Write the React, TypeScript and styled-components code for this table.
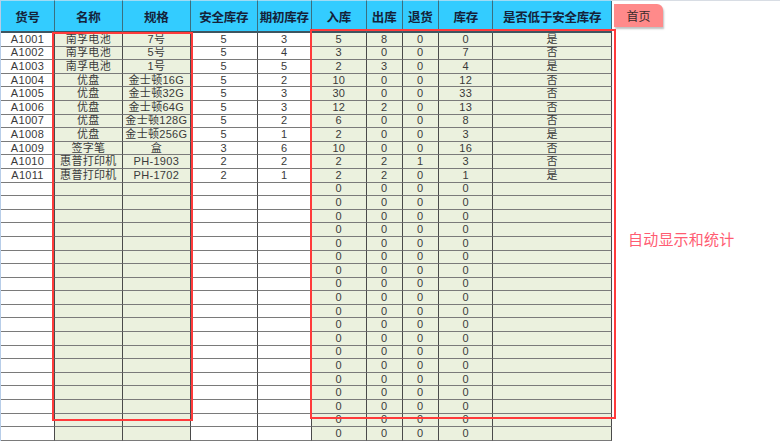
import React from "react";
import styled, { createGlobalStyle } from "styled-components";

const Global = createGlobalStyle`
  html, body { margin: 0; padding: 0; background: #ffffff; overflow: hidden; }
  body { font-family: "Liberation Sans", "Noto Sans CJK SC", sans-serif; }
`;

const COLS = [54, 67.7, 68.3, 66.7, 54.3, 54.7, 36, 36.3, 54.5, 118.5];
const GREEN = [false, true, true, false, false, true, true, true, true, true];
const HEADERS = ["货号", "名称", "规格", "安全库存", "期初库存", "入库", "出库", "退货", "库存", "是否低于安全库存"];

const DATA: string[][] = [
  ["A1001", "南孚电池", "7号", "5", "3", "5", "8", "0", "0", "是"],
  ["A1002", "南孚电池", "5号", "5", "4", "3", "0", "0", "7", "否"],
  ["A1003", "南孚电池", "1号", "5", "5", "2", "3", "0", "4", "是"],
  ["A1004", "优盘", "金士顿16G", "5", "2", "10", "0", "0", "12", "否"],
  ["A1005", "优盘", "金士顿32G", "5", "3", "30", "0", "0", "33", "否"],
  ["A1006", "优盘", "金士顿64G", "5", "3", "12", "2", "0", "13", "否"],
  ["A1007", "优盘", "金士顿128G", "5", "2", "6", "0", "0", "8", "否"],
  ["A1008", "优盘", "金士顿256G", "5", "1", "2", "0", "0", "3", "是"],
  ["A1009", "签字笔", "盒", "3", "6", "10", "0", "0", "16", "否"],
  ["A1010", "惠普打印机", "PH-1903", "2", "2", "2", "2", "1", "3", "否"],
  ["A1011", "惠普打印机", "PH-1702", "2", "1", "2", "2", "0", "1", "是"],
];
const TOTAL_ROWS = 30;
const rows: string[][] = [
  ...DATA,
  ...Array.from({ length: TOTAL_ROWS - DATA.length }, () => ["", "", "", "", "", "0", "0", "0", "0", ""]),
];

const Page = styled.div`
  display: flex;
  align-items: flex-start;
  width: 780px;
  height: 442px;
  overflow: hidden;
  position: relative;
`;

const Sheet = styled.div`
  display: grid;
  grid-template-columns: ${COLS.map((c) => `${c}px`).join(" ")};
  grid-template-rows: 33px repeat(${TOTAL_ROWS}, 13.6px);
  width: ${COLS.reduce((a, b) => a + b, 0)}px;
  flex: none;
  border-left: 1px solid #b7cde8;
  box-sizing: border-box;
`;

const HeadCell = styled.div`
  background: #33ccff;
  border-right: 1px solid #3a6f80;
  border-bottom: 2px solid #3f5560;
  border-top: 1px solid #9fdcf5;
  box-sizing: border-box;
  display: flex;
  align-items: center;
  justify-content: center;
  padding-top: 1px;
  font-family: "Noto Sans CJK SC", sans-serif;
  font-weight: 700;
  font-size: 12.5px;
  color: #15233a;
  white-space: nowrap;
  letter-spacing: -0.2px;
`;

const Cell = styled.div<{ $green: boolean }>`
  background: ${(p) => (p.$green ? "#ebf1de" : "#ffffff")};
  border-right: 1px solid #4a4a4a;
  border-bottom: 1px solid #7a7a7a;
  box-sizing: border-box;
  display: flex;
  align-items: center;
  justify-content: center;
  font-family: "Liberation Sans", "Noto Sans CJK SC", sans-serif;
  font-size: 11px;
  line-height: 1;
  color: #3a3a3a;
  white-space: nowrap;
  overflow: hidden;
  letter-spacing: 0.3px;
`;

const Side = styled.div`
  flex: 1;
  align-self: stretch;
  display: flex;
  flex-direction: column;
  align-items: flex-start;
  border-top: 1px solid #d8dde4;
  padding: 3px 0 0 3px;
  box-sizing: border-box;
`;

const HomeButton = styled.div`
  width: 49px;
  height: 23px;
  background: #ff8a8a;
  border-top-right-radius: 6px;
  box-shadow: 1px 2px 2px rgba(0, 0, 0, 0.25);
  display: flex;
  align-items: center;
  justify-content: center;
  font-family: "Noto Sans CJK SC", sans-serif;
  font-size: 12px;
  color: #3a2a2a;
`;

const Note = styled.div`
  margin: 203px 0 0 14px;
  font-family: "Noto Sans CJK SC", sans-serif;
  font-size: 15px;
  line-height: 18px;
  color: #ff5c72;
  letter-spacing: 0.2px;
`;

const Frame = styled.div`
  position: absolute;
  border: 2px solid #ff3b3b;
  box-sizing: border-box;
  pointer-events: none;
`;

export default function App() {
  return (
    <>
      <Global />
      <Page>
        <Sheet>
          {HEADERS.map((h) => (
            <HeadCell key={h}>{h}</HeadCell>
          ))}
          {rows.map((r, ri) =>
            r.map((v, ci) => (
              <Cell key={`${ri}-${ci}`} $green={GREEN[ci]}>
                {v}
              </Cell>
            ))
          )}
        </Sheet>
        <Side>
          <HomeButton>首页</HomeButton>
          <Note>自动显示和统计</Note>
        </Side>
        <Frame style={{ left: 52, top: 32, width: 141, height: 389 }} />
        <Frame style={{ left: 310, top: 29, width: 306, height: 390 }} />
      </Page>
    </>
  );
}
